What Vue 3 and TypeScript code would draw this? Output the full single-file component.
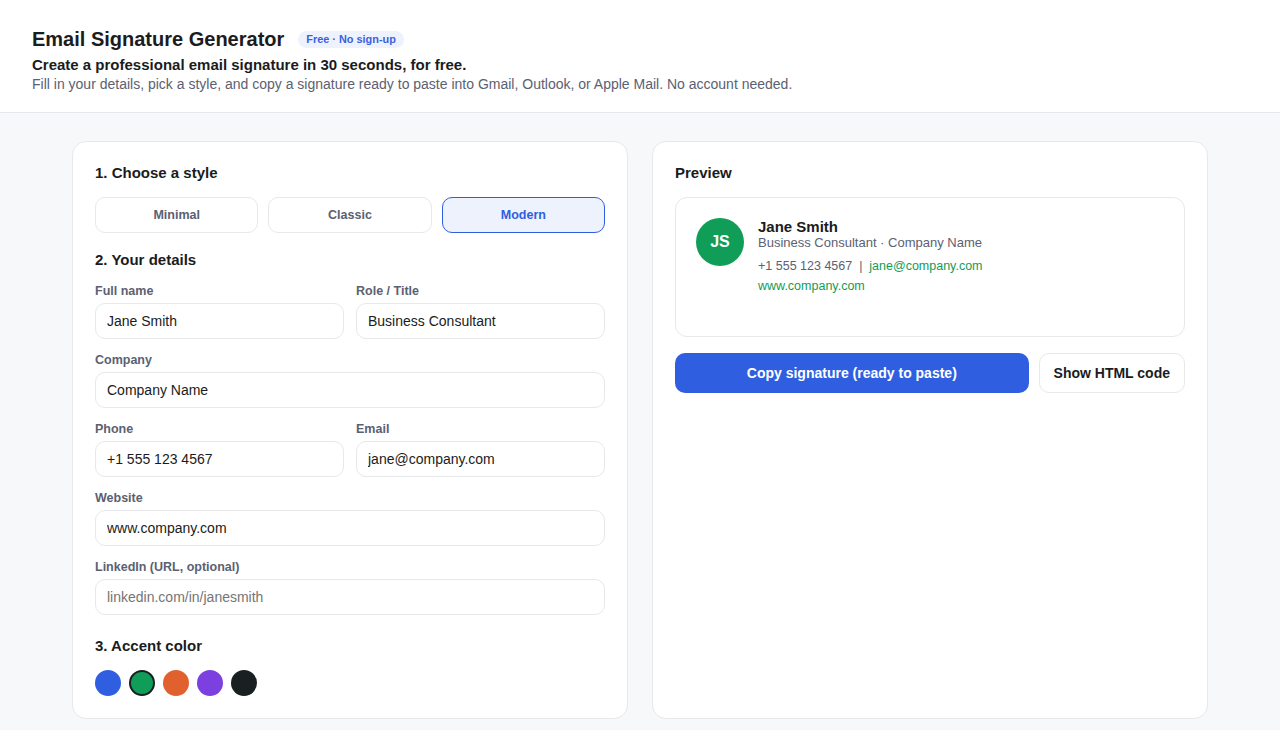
<script setup lang="ts">
import { computed, ref } from 'vue'

const styles = ['Minimal', 'Classic', 'Modern']
const colors = ['#2f5fe0', '#0f9d58', '#e0602e', '#7c3fe0', '#1a1f22']

const activeStyle = ref('Modern')
const accent = ref('#0f9d58')

const form = ref({
  name: 'Jane Smith',
  role: 'Business Consultant',
  company: 'Company Name',
  phone: '+1 555 123 4567',
  email: 'jane@company.com',
  website: 'www.company.com',
  linkedin: ''
})

const initials = computed(() =>
  form.value.name
    .split(' ')
    .map((p) => p[0])
    .join('')
    .toUpperCase()
)
</script>

<template>
  <div class="page">
    <header class="top">
      <div class="title-row">
        <h1 class="title">Email Signature Generator</h1>
        <span class="badge">Free · No sign-up</span>
      </div>
      <p class="lead">Create a professional email signature in 30 seconds, for free.</p>
      <p class="sub">Fill in your details, pick a style, and copy a signature ready to paste into Gmail, Outlook, or Apple Mail. No account needed.</p>
    </header>

    <main class="main">
      <section class="card">
        <h2 class="heading">1. Choose a style</h2>
        <div class="styles">
          <button
            v-for="s in styles"
            :key="s"
            class="style-btn"
            :class="{ active: s === activeStyle }"
            @click="activeStyle = s"
          >
            {{ s }}
          </button>
        </div>

        <h2 class="heading details">2. Your details</h2>
        <div class="fields">
          <div class="row">
            <label class="field">
              <span class="label">Full name</span>
              <input v-model="form.name" class="input" />
            </label>
            <label class="field">
              <span class="label">Role / Title</span>
              <input v-model="form.role" class="input" />
            </label>
          </div>
          <label class="field">
            <span class="label">Company</span>
            <input v-model="form.company" class="input" />
          </label>
          <div class="row">
            <label class="field">
              <span class="label">Phone</span>
              <input v-model="form.phone" class="input" />
            </label>
            <label class="field">
              <span class="label">Email</span>
              <input v-model="form.email" class="input" />
            </label>
          </div>
          <label class="field">
            <span class="label">Website</span>
            <input v-model="form.website" class="input" />
          </label>
          <label class="field">
            <span class="label">LinkedIn (URL, optional)</span>
            <input v-model="form.linkedin" class="input" placeholder="linkedin.com/in/janesmith" />
          </label>
        </div>

        <h2 class="heading accent-heading">3. Accent color</h2>
        <div class="swatches">
          <button
            v-for="c in colors"
            :key="c"
            class="swatch"
            :class="{ selected: c === accent }"
            :style="{ background: c }"
            @click="accent = c"
          ></button>
        </div>
      </section>

      <section class="card preview-card">
        <h2 class="heading">Preview</h2>
        <div class="preview">
          <div class="avatar" :style="{ background: accent }">{{ initials }}</div>
          <div class="sig">
            <div class="sig-name">{{ form.name }}</div>
            <div class="sig-role">{{ form.role }} · {{ form.company }}</div>
            <div class="sig-line contact">
              {{ form.phone }}&nbsp; |&nbsp; <a class="link" :style="{ color: accent }">{{ form.email }}</a>
            </div>
            <div class="sig-line">
              <a class="link" :style="{ color: accent }">{{ form.website }}</a>
            </div>
          </div>
        </div>
        <div class="actions">
          <button class="copy">Copy signature (ready to paste)</button>
          <button class="show">Show HTML code</button>
        </div>
      </section>
    </main>
  </div>
</template>

<style>
html,
body {
  margin: 0;
  background: #f7f8fa;
}
</style>

<style scoped>
.page {
  font-family: 'Liberation Sans', Arial, sans-serif;
  color: #1a1c20;
  min-height: 730px;
  background: #f7f8fa;
}

.top {
  background: #fff;
  border-bottom: 1px solid #e6e8ec;
  padding: 28px 32px 20px;
}

.title-row {
  display: flex;
  align-items: center;
  gap: 14px;
}

.title {
  margin: 0;
  font-size: 20px;
  line-height: 23px;
  font-weight: 700;
}

.badge {
  background: #eef2fd;
  color: #3b5fe0;
  font-size: 10.9px;
  font-weight: 700;
  line-height: 13px;
  padding: 2px 8px;
  border-radius: 999px;
}

.lead {
  margin: 5px 0 0;
  font-size: 15px;
  line-height: 17px;
  font-weight: 700;
}

.sub {
  margin: 3px 0 0;
  font-size: 14px;
  line-height: 16px;
  color: #5b6172;
}

.main {
  max-width: 1136px;
  margin: 0 auto;
  padding: 28px 0 11px;
  display: grid;
  grid-template-columns: 1fr 1fr;
  gap: 24px;
}

.card {
  background: #fff;
  border: 1px solid #e6e8ec;
  border-radius: 14px;
  padding: 22px;
}

.heading {
  margin: 0;
  font-size: 15px;
  line-height: 17px;
  font-weight: 700;
}

.styles {
  display: grid;
  grid-template-columns: repeat(3, 1fr);
  gap: 10px;
  margin-top: 16px;
}

.style-btn {
  height: 36px;
  padding-bottom: 2px;
  background: #fff;
  border: 1px solid #e6e8ec;
  border-radius: 10px;
  font: 700 12.5px 'Liberation Sans', Arial, sans-serif;
  color: #5b6172;
  cursor: pointer;
}

.style-btn.active {
  background: #eef2fd;
  border-color: #2f5fe0;
  color: #2f5fe0;
}

.details {
  margin-top: 18px;
}

.fields {
  display: flex;
  flex-direction: column;
  gap: 14px;
  margin-top: 16px;
}

.row {
  display: grid;
  grid-template-columns: 1fr 1fr;
  gap: 12px;
}

.field {
  display: flex;
  flex-direction: column;
  gap: 5px;
  min-width: 0;
}

.label {
  font-size: 12.5px;
  line-height: 14px;
  font-weight: 700;
  color: #5b6172;
}

.input {
  box-sizing: border-box;
  width: 100%;
  height: 36px;
  padding: 0 11px;
  border: 1px solid #e6e8ec;
  border-radius: 10px;
  background: #fff;
  font: 14px 'Liberation Sans', Arial, sans-serif;
  color: #1a1c20;
  outline: none;
}

.input::placeholder {
  color: #757575;
}

.accent-heading {
  margin-top: 22px;
}

.swatches {
  display: flex;
  gap: 8px;
  margin-top: 16px;
}

.swatch {
  box-sizing: border-box;
  width: 26px;
  height: 26px;
  padding: 0;
  border: 2px solid transparent;
  border-radius: 50%;
  cursor: pointer;
}

.swatch.selected {
  border-color: #1a1f22;
}

.preview {
  display: flex;
  gap: 14px;
  height: 140px;
  box-sizing: border-box;
  margin-top: 16px;
  padding: 20px;
  border: 1px solid #e6e8ec;
  border-radius: 12px;
}

.avatar {
  flex: none;
  width: 48px;
  height: 48px;
  border-radius: 50%;
  color: #fff;
  font-size: 16px;
  font-weight: 700;
  display: flex;
  align-items: center;
  justify-content: center;
}

.sig-name {
  font-size: 15px;
  line-height: 17px;
  font-weight: 700;
}

.sig-role {
  font-size: 13px;
  line-height: 15px;
  color: #5b6172;
}

.sig-line {
  font-size: 12.5px;
  line-height: 14px;
  color: #5b6172;
  margin-top: 6px;
}

.contact {
  margin-top: 9px;
}

.actions {
  display: flex;
  gap: 10px;
  margin-top: 16px;
}

.copy,
.show {
  height: 40px;
  border-radius: 10px;
  font: 700 14px 'Liberation Sans', Arial, sans-serif;
  cursor: pointer;
}

.copy {
  flex: 1;
  background: #2f5fe0;
  border: none;
  color: #fff;
}

.show {
  padding: 0 14px;
  background: #fff;
  border: 1px solid #e6e8ec;
  color: #1a1c20;
}
</style>
